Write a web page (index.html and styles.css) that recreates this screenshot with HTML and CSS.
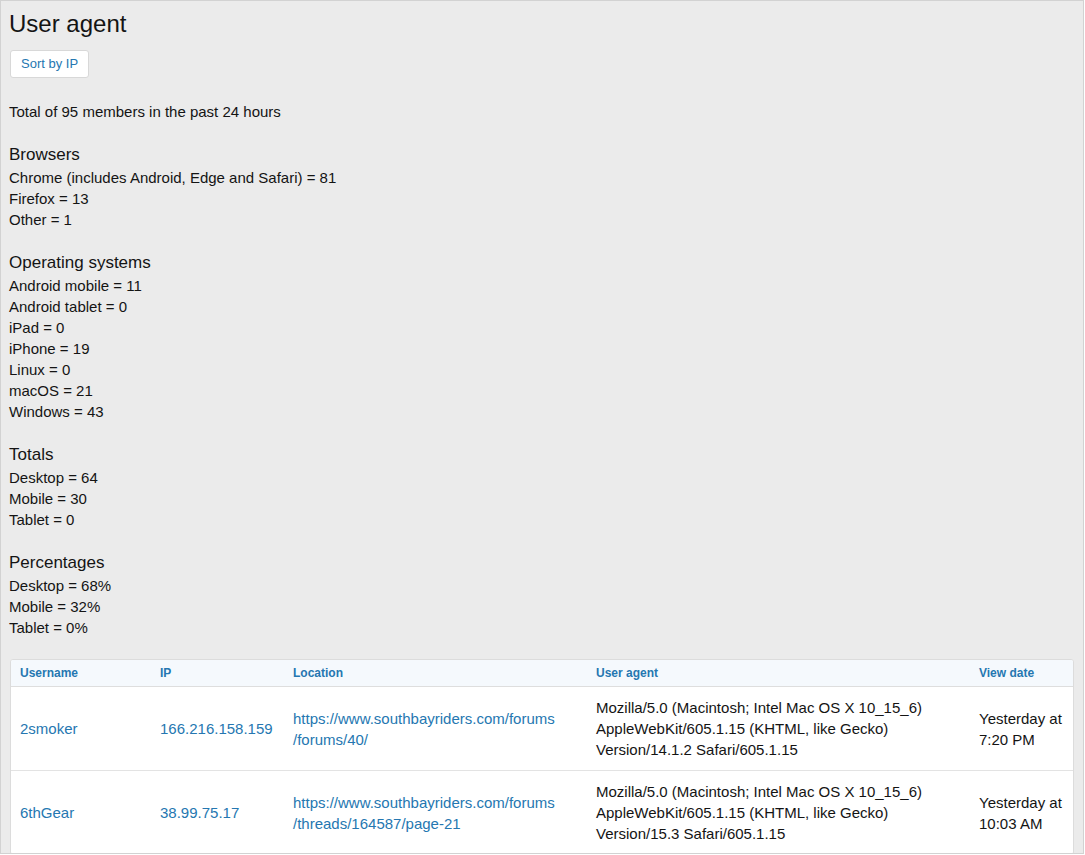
FILE: index.html
```html
<!DOCTYPE html>
<html lang="en">
<head>
  <meta charset="UTF-8" />
  <title>User agent</title>
  <meta name="viewport" content="width=device-width, initial-scale=1.0">
  <link rel="stylesheet" href="styles.css">
</head>
<body>
  <div class="page">
    <h1>User agent</h1>
    <button class="button" type="button">Sort by IP</button>

    <p class="summary">Total of 95 members in the past 24 hours</p>

    <div class="section">
      <h3>Browsers</h3>
      <div>Chrome (includes Android, Edge and Safari) = 81</div>
      <div>Firefox = 13</div>
      <div>Other = 1</div>
    </div>

    <div class="section">
      <h3>Operating systems</h3>
      <div>Android mobile = 11</div>
      <div>Android tablet = 0</div>
      <div>iPad = 0</div>
      <div>iPhone = 19</div>
      <div>Linux = 0</div>
      <div>macOS = 21</div>
      <div>Windows = 43</div>
    </div>

    <div class="section">
      <h3>Totals</h3>
      <div>Desktop = 64</div>
      <div>Mobile = 30</div>
      <div>Tablet = 0</div>
    </div>

    <div class="section">
      <h3>Percentages</h3>
      <div>Desktop = 68%</div>
      <div>Mobile = 32%</div>
      <div>Tablet = 0%</div>
    </div>

    <div class="block">
      <table class="dataList">
        <colgroup>
          <col class="col-user">
          <col class="col-ip">
          <col class="col-location">
          <col class="col-agent">
          <col class="col-date">
        </colgroup>
        <thead>
          <tr>
            <th>Username</th>
            <th>IP</th>
            <th>Location</th>
            <th>User agent</th>
            <th>View date</th>
          </tr>
        </thead>
        <tbody>
          <tr>
            <td><a href="#">2smoker</a></td>
            <td><a href="#">166.216.158.159</a></td>
            <td><a href="#">https://www.southbayriders.com/forums<br>/forums/40/</a></td>
            <td>Mozilla/5.0 (Macintosh; Intel Mac OS X 10_15_6) AppleWebKit/605.1.15 (KHTML, like Gecko) Version/14.1.2 Safari/605.1.15</td>
            <td class="date">Yesterday at 7:20 PM</td>
          </tr>
          <tr>
            <td><a href="#">6thGear</a></td>
            <td><a href="#">38.99.75.17</a></td>
            <td><a href="#">https://www.southbayriders.com/forums<br>/threads/164587/page-21</a></td>
            <td>Mozilla/5.0 (Macintosh; Intel Mac OS X 10_15_6) AppleWebKit/605.1.15 (KHTML, like Gecko) Version/15.3 Safari/605.1.15</td>
            <td class="date">Yesterday at 10:03 AM</td>
          </tr>
        </tbody>
      </table>
    </div>
  </div>
</body>
</html>
```

FILE: styles.css
```css
:root {
  --bg-color: #ebebeb;
  --text-color: #141414;
  --link-color: #2577b1;
  --border-color: #dcdcdc;
}

body {
  margin: 0;
  font-family: "Liberation Sans", Arial, sans-serif;
  color: var(--text-color);
}

.page {
  box-sizing: border-box;
  width: 1084px;
  height: 854px;
  overflow: hidden;
  padding: 0 9px 0 8px;
  background: var(--bg-color);
  border: 1px solid #d2d2d2;
}

h1 {
  margin: 8px 0 0;
  font-size: 24px;
  line-height: 30px;
  font-weight: normal;
}

.button {
  display: block;
  margin: 11px 0 0 1px;
  padding: 6px 10px;
  font-family: inherit;
  font-size: 13px;
  line-height: 14px;
  color: var(--link-color);
  background: white;
  border: 1px solid #d8d8d8;
  border-radius: 3px;
  cursor: pointer;
}

.summary {
  margin: 23px 0 0;
  font-size: 15px;
  line-height: 21px;
}

.section {
  margin-top: 21px;
  font-size: 15px;
  line-height: 21px;
}

.section h3 {
  margin: 0;
  font-size: 17px;
  line-height: 24px;
  font-weight: normal;
}

.block {
  margin: 21px 0 0 1px;
  background: white;
  border: 1px solid var(--border-color);
  border-radius: 3px;
  overflow: hidden;
}

.dataList {
  width: 100%;
  table-layout: fixed;
  border-collapse: separate;
  border-spacing: 0;
  font-size: 15px;
  line-height: 21px;
}

.col-user { width: 140px; }
.col-ip { width: 133px; }
.col-location { width: 303px; }
.col-agent { width: 383px; }

.dataList th {
  padding: 6px 6px 6px 9px;
  font-size: 12px;
  line-height: 14px;
  font-weight: bold;
  text-align: left;
  color: var(--link-color);
  background: #f5f9fd;
  border-bottom: 1px solid #dedede;
}

.dataList td {
  padding: 10px 9px;
  vertical-align: middle;
}

.dataList tbody tr + tr td {
  border-top: 1px solid #e3e3e3;
}

.dataList td.date {
  padding-right: 5px;
}

.dataList a {
  color: var(--link-color);
  text-decoration: none;
}
```
